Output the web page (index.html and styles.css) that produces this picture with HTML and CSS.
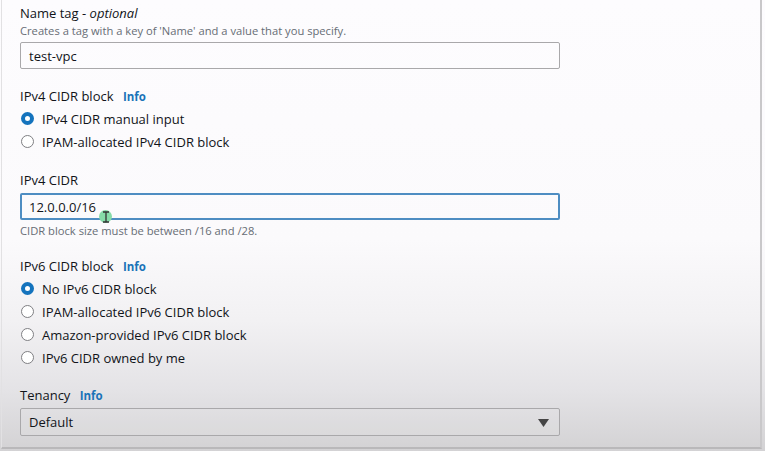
FILE: index.html
```html
<!DOCTYPE html>
<html>
<head>
<meta charset="utf-8">
<link rel="stylesheet" href="styles.css">
</head>
<body>
<div class="panel">
  <div class="field f-name">
    <div class="label">Name tag - <i>optional</i></div>
    <div class="desc">Creates a tag with a key of 'Name' and a value that you specify.</div>
    <div class="input">test-vpc</div>
  </div>

  <div class="field f-gap">
    <div class="label">IPv4 CIDR block <span class="info">Info</span></div>
    <div class="radios">
      <div class="radio"><span class="dot on"></span>IPv4 CIDR manual input</div>
      <div class="radio"><span class="dot"></span>IPAM-allocated IPv4 CIDR block</div>
    </div>
  </div>

  <div class="field f-gap">
    <div class="label">IPv4 CIDR</div>
    <div class="input focus">12.0.0.0/16<span class="cursor"><svg width="8" height="12" viewBox="0 0 8 12"><path d="M1 1h6M4 1v10M1 11h6" stroke="#333" stroke-width="1.3" fill="none"/></svg></span></div>
    <div class="help">CIDR block size must be between /16 and /28.</div>
  </div>

  <div class="field f-gap">
    <div class="label">IPv6 CIDR block <span class="info">Info</span></div>
    <div class="radios">
      <div class="radio"><span class="dot on"></span>No IPv6 CIDR block</div>
      <div class="radio"><span class="dot"></span>IPAM-allocated IPv6 CIDR block</div>
      <div class="radio"><span class="dot"></span>Amazon-provided IPv6 CIDR block</div>
      <div class="radio"><span class="dot"></span>IPv6 CIDR owned by me</div>
    </div>
  </div>

  <div class="field f-ten">
    <div class="label">Tenancy <span class="info">Info</span></div>
    <div class="input select">Default<svg class="caret" width="11" height="8" viewBox="0 0 11 8"><path d="M0 0h11L5.5 8z" fill="#454545"/></svg></div>
  </div>
</div>
</body>
</html>
```

FILE: styles.css
```css
html, body {
  margin: 0;
  padding: 0;
}
body {
  width: 765px;
  height: 451px;
  overflow: hidden;
  font-family: "Open Sans", "Noto Sans", sans-serif;
  color: #16191f;
  background: linear-gradient(to bottom, #fdfcfe 0px, #fbfafc 240px, #f2f1f3 320px, #e4e3e6 390px, #d3d2d4 451px);
}
.panel {
  margin-left: 1px;
  width: 761px;
  height: 449px;
  box-sizing: border-box;
  border-left: 1px solid #e2e1e3;
  border-right: 2px solid #c9c8ca;
  border-bottom: 2px solid #b9b8ba;
  padding: 3px 0 0 18px;
}
.field { display: flex; flex-direction: column; }
.f-gap { margin-top: 17px; }
.f-ten { margin-top: 16px; }
.label {
  font-size: 13px;
  line-height: 20px;
  height: 20px;
  color: #111419;
}
.label i { font-style: italic; }
.info {
  color: #1a73b8;
  font-weight: 700;
  font-size: 11.5px;
  margin-left: 6px;
}
.desc, .help {
  font-size: 11.2px;
  line-height: 16px;
  color: #676d75;
}
.help { margin-top: 3px; }
.input {
  position: relative;
  width: 540px;
  height: 27px;
  box-sizing: border-box;
  border: 1px solid #a9a8aa;
  border-radius: 2px;
  padding: 0 8px;
  display: flex;
  align-items: center;
  font-size: 13px;
  color: #111419;
  margin-top: 3px;
  background: rgba(255,255,255,0.15);
}
.input.focus {
  border: 2px solid #4e8dc2;
  padding-left: 7px;
}
.select {
  height: 28px;
  justify-content: space-between;
  padding-right: 10px;
  background: rgba(255,255,255,0.08);
}
.caret { margin-top: 1px; }
.cursor {
  position: absolute;
  left: 77px;
  top: 15px;
  width: 13px;
  height: 13px;
  border-radius: 50%;
  background: #86dba8;
  display: flex;
  align-items: center;
  justify-content: center;
}
.radios { margin-top: 1px; display: flex; flex-direction: column; }
.radio {
  height: 23px;
  display: flex;
  align-items: center;
  font-size: 13px;
  color: #111419;
}
.dot {
  width: 13px;
  height: 13px;
  box-sizing: border-box;
  border: 1.5px solid #7f7f83;
  border-radius: 50%;
  margin: 0 8px 0 1px;
  background: #fff;
}
.dot.on {
  border: 4px solid #1473bd;
}
```
